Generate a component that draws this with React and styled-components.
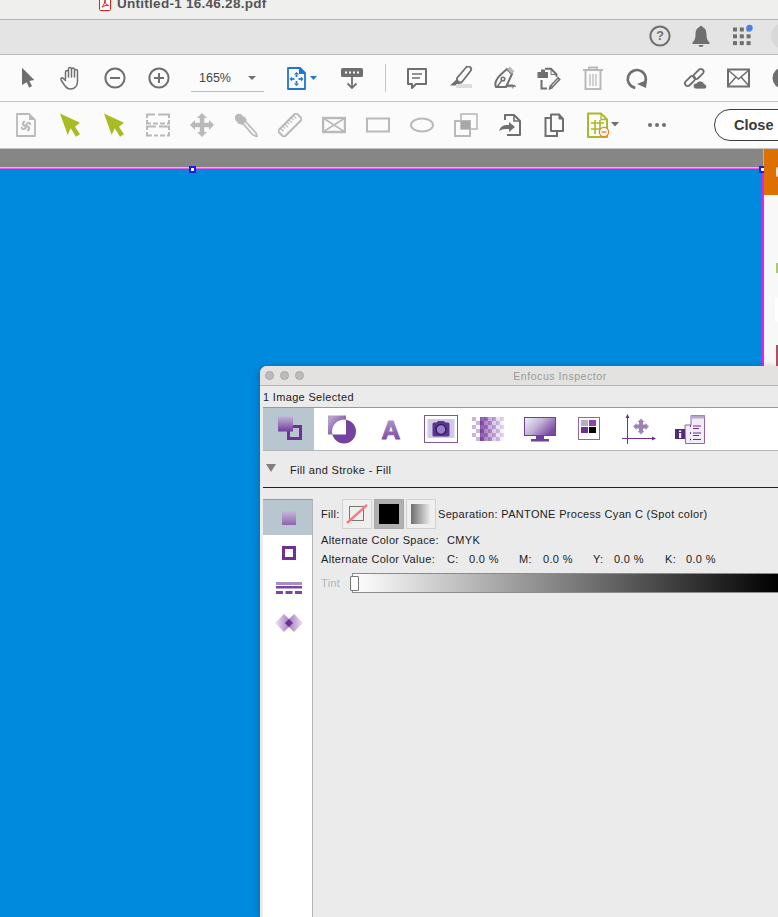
import styled, { createGlobalStyle } from "styled-components";

const GRAY = "#6f6f6f";
const OFF = "#b9b9b9";
const GREEN = "#a9bb22";
const BLUE = "#1f75d0";
const PURPLE = "#6f2f96";

const GlobalStyle = createGlobalStyle`
  html, body {
    margin: 0;
    padding: 0;
    background: #ffffff;
  }
  body {
    font-family: "Liberation Sans", Arial, sans-serif;
    overflow: hidden;
  }
`;

const Page = styled.div`
  width: 778px;
  height: 917px;
  display: flex;
  flex-direction: column;
  overflow: hidden;
`;

const TitleBar = styled.div`
  height: 20px;
  flex-shrink: 0;
  display: flex;
  align-items: flex-end;
  gap: 6px;
  padding: 0 0 8px 99px;
  box-sizing: border-box;
  overflow: hidden;
  background: #efefed;
  border-bottom: 1px solid #b4b4b4;
`;

const FileName = styled.span`
  font-size: 13.5px;
  line-height: 15px;
  font-weight: 700;
  letter-spacing: 0.27px;
  color: #555555;
  white-space: nowrap;
`;

const NavBar = styled.div`
  height: 35px;
  flex-shrink: 0;
  display: flex;
  align-items: center;
  justify-content: flex-end;
  box-sizing: border-box;
  padding-bottom: 2px;
  background: #e4e4e4;
  border-bottom: 1px solid #b9b9b9;
`;

const NavCell = styled.div`
  width: 41px;
  height: 32px;
  display: flex;
  align-items: center;
  justify-content: center;
`;

const Avatar = styled.div`
  width: 26px;
  height: 26px;
  flex-shrink: 0;
  margin-left: 9px;
  margin-right: -19px;
  border-radius: 50%;
  background: #d8d8d8;
`;

const Toolbar = styled.div`
  height: 47px;
  flex-shrink: 0;
  display: flex;
  align-items: center;
  box-sizing: border-box;
  padding-left: ${(p) => p.$inset}px;
  background: #fbfbfb;
  border-bottom: 1px solid #c4c4c4;
`;

const ToolCell = styled.div`
  width: 44px;
  height: 30px;
  flex-shrink: 0;
  display: flex;
  align-items: center;
  justify-content: center;
  margin-left: ${(p) => p.$gap || 0}px;
`;

const ZoomSelect = styled.div`
  width: 73px;
  height: 26px;
  flex-shrink: 0;
  margin: 1px 0 0 10px;
  display: flex;
  align-items: center;
  justify-content: space-between;
  box-sizing: border-box;
  padding: 0 8px 0 8px;
  font-size: 12.5px;
  color: #444444;
  border-bottom: 1px solid #bdbdbd;
`;

const ToolDivider = styled.div`
  width: 1px;
  height: 28px;
  flex-shrink: 0;
  margin-left: 11px;
  background: #c4c4c4;
`;

const CloseButton = styled.button`
  flex-shrink: 0;
  width: 90px;
  height: 32px;
  margin-left: 35px;
  padding: 0 0 0 19px;
  text-align: left;
  font-family: inherit;
  font-size: 14.5px;
  font-weight: 700;
  color: #3a3a3a;
  background: #ffffff;
  border: 1px solid #3c3c3c;
  border-radius: 16px;
`;

const Workspace = styled.div`
  position: relative;
  flex: 1;
  display: flex;
  min-height: 0;
`;

const Canvas = styled.div`
  flex: 1;
  display: flex;
  flex-direction: column;
  min-width: 0;
`;

const GrayBand = styled.div`
  height: 19px;
  flex-shrink: 0;
  box-sizing: border-box;
  background: #868686;
  border-right: 1px solid #b5b5b5;
  border-bottom: 1px solid #c9c9c9;
`;

const Sheet = styled.div`
  position: relative;
  flex: 1;
  background: #008ade;
  border-top: 1px solid #e85ce4;
  border-right: 2px solid #f01ce8;
`;

const Handle = styled.span`
  position: absolute;
  top: -3px;
  left: ${(p) => p.$x}px;
  width: 3px;
  height: 3px;
  background: #ffffff;
  border: 2px solid #1a1ae0;
`;

const SidePanel = styled.div`
  width: 14px;
  flex-shrink: 0;
  display: flex;
  flex-direction: column;
  align-items: flex-end;
  background: #f8f8f8;
`;

const OrangeHead = styled.div`
  align-self: stretch;
  height: 46px;
  margin-bottom: 68px;
  background: #dd7000;
  position: relative;
`;

const OrangeMark = styled.span`
  position: absolute;
  right: 0;
  top: 18px;
  width: 2px;
  height: 10px;
  background: #f4e7d8;
  border-radius: 6px 0 0 6px;
`;

const PanelMark = styled.span`
  width: ${(p) => p.$w}px;
  height: ${(p) => p.$h}px;
  margin-bottom: ${(p) => p.$after}px;
  background: ${(p) => p.$color};
`;

const Inspector = styled.section`
  position: absolute;
  top: 217px;
  left: 260px;
  right: 0;
  bottom: 0;
  display: flex;
  flex-direction: column;
  background: #ebebeb;
  border-top-left-radius: 7px;
  box-shadow: -2px 0 6px rgba(0, 0, 0, 0.18);
  overflow: hidden;
  color: #222222;
  font-size: 11px;
  letter-spacing: 0.33px;
`;

const WindowBar = styled.div`
  position: relative;
  height: 20px;
  flex-shrink: 0;
  display: flex;
  align-items: center;
  justify-content: center;
  box-sizing: border-box;
  padding-left: 82px;
  background: #e3e2e0;
  border-bottom: 1px solid #b5b5b5;
  color: #9a9a9a;
  font-size: 10.5px;
  letter-spacing: 0.55px;
`;

const Lights = styled.div`
  position: absolute;
  left: 5px;
  top: 5px;
  display: flex;
  gap: 6px;
`;

const Light = styled.span`
  width: 7px;
  height: 7px;
  border-radius: 50%;
  background: #bcbcba;
  border: 1px solid #a9a9a7;
`;

const SelectionBar = styled.div`
  height: 21px;
  flex-shrink: 0;
  display: flex;
  align-items: center;
  padding-left: 3px;
`;

const TabStrip = styled.div`
  height: 44px;
  flex-shrink: 0;
  display: flex;
  align-items: stretch;
  box-sizing: border-box;
  margin-left: 3px;
  background: #ffffff;
  border-top: 1px solid #999999;
  border-bottom: 1px solid #b5b5b5;
`;

const Tab = styled.div`
  width: 49.5px;
  flex-shrink: 0;
  display: flex;
  align-items: center;
  justify-content: center;
  &:first-child {
    width: 51px;
    margin-right: 3px;
    background: #b8c7cf;
  }
`;

const SectionHead = styled.div`
  height: 37px;
  flex-shrink: 0;
  display: flex;
  align-items: center;
  box-sizing: border-box;
  margin-left: 3px;
  padding: 2px 0 0 3px;
  gap: 14px;
  border-bottom: 1px solid #222222;
`;

const Triangle = styled.span`
  width: 0;
  height: 0;
  margin-top: -5px;
  border-left: 5px solid transparent;
  border-right: 5px solid transparent;
  border-top: 8px solid #808080;
`;

const Body = styled.div`
  flex: 1;
  display: flex;
  min-height: 0;
  margin-top: 11px;
  padding-left: 3px;
`;

const SideList = styled.div`
  width: 50px;
  flex-shrink: 0;
  box-sizing: border-box;
  background: #ffffff;
  border-top: 1px solid #999999;
  border-right: 1px solid #b5b5b5;
`;

const SideItem = styled.div`
  height: 35px;
  display: flex;
  align-items: center;
  justify-content: center;
  box-sizing: border-box;
  padding-left: 3px;
  background: ${(p) => (p.$active ? "#b8c7cf" : "transparent")};
`;

const Form = styled.div`
  flex: 1;
  min-width: 0;
  padding-left: 8px;
  display: flex;
  flex-direction: column;
`;

const FillRow = styled.div`
  height: 30px;
  flex-shrink: 0;
  margin-bottom: 1px;
  display: flex;
  align-items: center;
  gap: 2px;
  white-space: nowrap;
`;

const FillLabel = styled.span`
  width: 19px;
`;

const FillButton = styled.div`
  width: 30px;
  height: 30px;
  flex-shrink: 0;
  box-sizing: border-box;
  display: flex;
  align-items: center;
  justify-content: center;
  background: ${(p) => (p.$active ? "#b0b0b0" : "#efefef")};
  border: 1px solid ${(p) => (p.$active ? "#a9a9a9" : "#d2d2d2")};
`;

const BlackSwatch = styled.span`
  width: 20px;
  height: 20px;
  background: #000000;
`;

const GradientSwatch = styled.span`
  width: 20px;
  height: 20px;
  background: linear-gradient(to right, #6e6e6e, #f2f2f2);
`;

const MetaRow = styled.div`
  height: 19px;
  flex-shrink: 0;
  display: grid;
  grid-template-columns: 126px 22px 50px 24px 50px 21px 51px 21px 60px;
  align-items: center;
  white-space: nowrap;
`;

const TintRow = styled.div`
  height: 20px;
  flex-shrink: 0;
  margin-top: 5px;
  display: flex;
  align-items: center;
`;

const TintLabel = styled.span`
  width: 31px;
  color: #b5b5b5;
`;

const TintTrack = styled.div`
  position: relative;
  flex: 1;
  height: 20px;
  box-sizing: border-box;
  background: linear-gradient(to right, #ffffff, #000000);
  border: 1px solid #8c8c8c;
  border-right: 0;
`;

const TintThumb = styled.span`
  position: absolute;
  left: -3px;
  top: 2px;
  width: 9px;
  height: 15px;
  box-sizing: border-box;
  background: #ffffff;
  border: 1px solid #777777;
  border-radius: 1px;
`;

const Caret = styled.span`
  width: 0;
  height: 0;
  border-left: 4px solid transparent;
  border-right: 4px solid transparent;
  border-top: 4.5px solid ${(p) => p.$color};
`;

const Svg = ({ w = 24, h = 24, children }) => (
  <svg width={w} height={h} viewBox={`0 0 ${w} ${h}`} fill="none" style={{ display: "block" }}>
    {children}
  </svg>
);

const Arrows = ({ cx, cy, r, s, color }) => (
  <g fill={color}>
    <path d={`M${cx - s} ${cy - r + s} L${cx} ${cy - r} L${cx + s} ${cy - r + s} Z`} />
    <path d={`M${cx - s} ${cy + r - s} L${cx} ${cy + r} L${cx + s} ${cy + r - s} Z`} />
    <path d={`M${cx - r + s} ${cy - s} L${cx - r} ${cy} L${cx - r + s} ${cy + s} Z`} />
    <path d={`M${cx + r - s} ${cy - s} L${cx + r} ${cy} L${cx + r - s} ${cy + s} Z`} />
    <path d={`M${cx - 0.9} ${cy - r + s} h1.8 V${cy + r - s} h-1.8 Z`} />
    <path d={`M${cx - r + s} ${cy - 0.9} H${cx + r - s} v1.8 H${cx - r + s} Z`} />
  </g>
);

const PointerIcon = ({ color, green }) =>
  green ? (
    <Svg>
      <path d="M2 .5 L9.7 22 L12.7 15.3 L18 23.7 L22 21.3 L17 13.7 L22 9.7 Z" fill={color} strokeLinejoin="round" />
    </Svg>
  ) : (
    <Svg>
      <path d="M7 1.7 V19 L11.7 16.3 L14.3 21.7 L17 20 L14.3 15 L19.3 14 Z" fill={color} />
    </Svg>
  );

const HandIcon = () => (
  <Svg>
    <path
      d="M6.5 13 V6 a1.5 1.5 0 0 1 3 0 V11 M9.5 5 V3 a1.5 1.5 0 0 1 3 0 V11 M12.5 3.5 a1.5 1.5 0 0 1 3 0 V11 M15.5 5 a1.5 1.5 0 0 1 3 0 V15 c0 5 -3 8 -7 8 c-3.5 0 -5 -2 -6.5 -4.5 L2 14 c-.8 -1.5 1 -2.8 2.3 -1.6 L6.5 14.5"
      stroke={GRAY}
      strokeWidth="1.5"
      strokeLinecap="round"
      strokeLinejoin="round"
    />
  </Svg>
);

const ZoomIcon = ({ plus }) => (
  <Svg>
    <circle cx="12" cy="12" r="9.6" stroke={GRAY} strokeWidth="2" />
    <path d="M7 12 H17" stroke={GRAY} strokeWidth="2" />
    {plus && <path d="M12 7 V17" stroke={GRAY} strokeWidth="2" />}
  </Svg>
);

const FitIcon = () => (
  <Svg w={44} h={26}>
    <path d="M15 3 H27 L32 8 V24 H15 Z" stroke={BLUE} strokeWidth="1.8" strokeLinejoin="round" />
    <path d="M26 2 L33 9 H26 Z" fill={BLUE} />
    <Arrows cx={23.5} cy={14} r={7} s={2.6} color={BLUE} />
    <rect x="21.5" y="12" width="4" height="4" fill="#fbfbfb" />
    <path d="M37 11 H44 L40.5 15 Z" fill={BLUE} />
  </Svg>
);

const StampIcon = () => (
  <Svg>
    <rect x="1" y="2" width="22" height="9" rx="1.5" fill={GRAY} />
    <path d="M5 6.5 h14" stroke="#ffffff" strokeWidth="2" strokeDasharray="2 2" />
    <path d="M12 11 V22 M7.5 17.5 L12 22 L16.5 17.5" stroke={GRAY} strokeWidth="1.8" />
  </Svg>
);

const CommentIcon = () => (
  <Svg>
    <path d="M3 3 H21 V18 H11 L7 22 V18 H3 Z" stroke={GRAY} strokeWidth="2" strokeLinejoin="round" />
    <path d="M7 8 H17 M7 12 H15" stroke={GRAY} strokeWidth="1.4" />
  </Svg>
);

const HighlightIcon = () => (
  <Svg>
    <path d="M8 12 L17 1.5 a2.7 2.7 0 0 1 4.5 3.5 L12.5 16.5 L8 16.5 Z" stroke={GRAY} strokeWidth="1.8" strokeLinejoin="round" />
    <path d="M8 13 L12 17 L6 19.5 L1 19.5 Z" fill={GRAY} />
    <rect x="7" y="18" width="16" height="4" fill="#dddddd" />
  </Svg>
);

const SignIcon = () => (
  <Svg>
    <path d="M14 3 L19 8 L13 21 H3 C0 15 7 9 14 3 Z" stroke={GRAY} strokeWidth="2" strokeLinejoin="round" />
    <path d="M14 3 L17 .5 L21.5 5.5 L19 8 Z" fill="#bbbbbb" />
    <circle cx="10" cy="13" r="1.8" stroke={GRAY} strokeWidth="1.5" />
    <path d="M4 21 L9 14" stroke={GRAY} strokeWidth="1.4" />
    <path d="M14 21 q1 -4 2 0 q1 -4 2 0 q1 -4 2 0 q1 -3 2.5 0" stroke={GRAY} strokeWidth="1.3" />
  </Svg>
);

const DocEditIcon = () => (
  <Svg>
    <path d="M8 2.8 H14 L19.5 8.5 V11" stroke={GRAY} strokeWidth="1.9" />
    <path d="M14 2 V8.5 H20" stroke={GRAY} strokeWidth="1" />
    <path d="M4.5 14 V22.5 H10" stroke={GRAY} strokeWidth="2" />
    <path d="M.5 6 H4 V3.5 H8 V6 H11 V12 H.5 Z" fill={GRAY} />
    <path d="M14 21 L22.5 12" stroke={GRAY} strokeWidth="3.8" />
    <path d="M15 19.8 L21.3 13.2" stroke="#fbfbfb" strokeWidth="1" />
    <path d="M11.5 24 L12.6 19.4 L15.8 22.4 Z" fill={GRAY} />
  </Svg>
);

const TrashIcon = () => (
  <Svg>
    <path d="M2 4 H22 M8 4 V1.5 H16 V4" stroke={OFF} strokeWidth="2" />
    <path d="M4.5 5 V23 H19.5 V5" stroke={OFF} strokeWidth="2" />
    <path d="M9 8 V20 M12 8 V20 M15 8 V20" stroke={OFF} strokeWidth="1.3" />
  </Svg>
);

const RotateIcon = () => (
  <Svg>
    <path d="M19.5 17 A9 9 0 1 0 12 21" stroke={GRAY} strokeWidth="2.6" transform="rotate(10 12 12) translate(0 1)" />
    <path d="M13 21 L23 17 L22 25 Z" fill={GRAY} transform="translate(-1 -3)" />
  </Svg>
);

const LinkIcon = () => (
  <Svg w={26} h={24}>
    <rect x="-6" y="-2.7" width="12" height="5.4" rx="2.7" transform="translate(8 15) rotate(-45)" stroke={GRAY} strokeWidth="1.8" />
    <rect x="-6" y="-2.7" width="12" height="5.4" rx="2.7" transform="translate(16.5 8) rotate(-45)" stroke={GRAY} strokeWidth="1.8" />
    <path d="M14 23 a3 3 0 0 1 .5 -6 a4.5 4.5 0 0 1 8 1 a2.6 2.6 0 0 1 .5 5 Z" fill={GRAY} stroke="#fbfbfb" strokeWidth=".8" />
  </Svg>
);

const MailIcon = () => (
  <Svg>
    <rect x="1" y="3.5" width="21" height="17" stroke={GRAY} strokeWidth="2" />
    <path d="M1 4 L11.5 13 L22 4 M1 20 L9 11 M22 20 L14 11" stroke={GRAY} strokeWidth="1.5" />
  </Svg>
);

const DocFanIcon = () => (
  <Svg>
    <path d="M3 1 H15 L21 7 V23 H3 Z" stroke={OFF} strokeWidth="1.8" strokeLinejoin="round" />
    <path d="M15 1 V7 H21" fill={OFF} />
    <path d="M12 13 C8 13 8 8 11 9 M12 13 C16 13 16 18 13 17 M12 13 C12 9 17 9 16 12 M12 13 C12 17 7 17 8 14" stroke={OFF} strokeWidth="2" />
  </Svg>
);

const DashedTableIcon = () => (
  <Svg>
    <path d="M1 5 V1.5 H9 M12 1.5 H23 V5 M1 7 V10.5 H5 M7 10.5 H12 M14 10.5 H19 M21 10.5 H23 V7" stroke={OFF} strokeWidth="2" />
    <path d="M1 17 V13.5 H10 M13 13.5 H23 V17 M1 19 V22.5 H6 M8 22.5 H12 M14 22.5 H19 M21 22.5 H23 V19" stroke={OFF} strokeWidth="2" />
  </Svg>
);

const MoveIcon = () => (
  <Svg>
    <Arrows cx={12} cy={12} r={12} s={5} color={OFF} />
    <rect x="9.8" y="5" width="4.4" height="14" fill={OFF} />
    <rect x="5" y="9.8" width="14" height="4.4" fill={OFF} />
  </Svg>
);

const DropperIcon = () => (
  <Svg>
    <circle cx="5" cy="5" r="4.2" fill={OFF} />
    <path d="M3 10 L10 3 L13 7 L8 12 Z" fill={OFF} />
    <path d="M8.5 10 L11 8 L22 20 L23 23.5 L19 22 Z" stroke={OFF} strokeWidth="1.8" strokeLinejoin="round" />
  </Svg>
);

const RulerIcon = () => (
  <Svg>
    <g transform="rotate(-45 12 12)">
      <rect x="-1" y="7.5" width="26" height="9" rx="1.5" stroke={OFF} strokeWidth="2" />
      <path d="M3 8 v4 M6 8 v3 M9 8 v4 M12 8 v3 M15 8 v4 M18 8 v3 M21 8 v4" stroke={OFF} strokeWidth="1.2" />
    </g>
  </Svg>
);

const CrossBoxIcon = () => (
  <Svg>
    <rect x="1" y="5" width="22" height="14" stroke={OFF} strokeWidth="2.4" />
    <path d="M1 5 L23 19 M23 5 L1 19" stroke={OFF} strokeWidth="1.5" />
  </Svg>
);

const BoxIcon = () => (
  <Svg>
    <rect x="1" y="5.5" width="22" height="13" stroke={OFF} strokeWidth="2" />
  </Svg>
);

const OvalIcon = () => (
  <Svg>
    <ellipse cx="12" cy="12" rx="11" ry="6.5" stroke={OFF} strokeWidth="2" />
  </Svg>
);

const OverlapIcon = () => (
  <Svg>
    <rect x="7" y="1" width="16" height="15" stroke={OFF} strokeWidth="1.6" />
    <rect x="1" y="8" width="15" height="15" stroke={OFF} strokeWidth="2" />
    <rect x="7" y="8" width="9" height="8" fill="#a8a8a8" />
  </Svg>
);

const ImportIcon = () => (
  <Svg>
    <path d="M7 7 V2 H16 L22 8 V22 H9" stroke={GRAY} strokeWidth="2" strokeLinejoin="round" />
    <path d="M16 2 V8 H22" stroke={GRAY} strokeWidth="1.6" />
    <path d="M1 18 C3 12 7 12 11 12 V9 L17 14 L11 19 V16 C7 16 4 16 1 18 Z" fill={GRAY} />
  </Svg>
);

const CopyIcon = () => (
  <Svg>
    <path d="M9 1.5 H17 L21 6 V18 H9 Z" stroke={GRAY} strokeWidth="2" strokeLinejoin="round" />
    <path d="M17 1.5 V6 H21" fill={GRAY} stroke={GRAY} strokeWidth="1" />
    <path d="M9 5 H3.5 V23 H15 V18" stroke={GRAY} strokeWidth="2" />
  </Svg>
);

const SheetIcon = () => (
  <Svg w={44} h={26}>
    <path d="M12 1.5 H25 L31 7.5 V25 H12 Z" stroke={GREEN} strokeWidth="2" strokeLinejoin="round" />
    <path d="M25 1.5 V7.5 H31" stroke={GREEN} strokeWidth="1.3" />
    <path d="M15 11 H28 M15 17 H28 M19 8 V22 M24 8 V22" stroke={GREEN} strokeWidth="1.6" />
    <circle cx="28" cy="20" r="4.6" fill="#ffffff" stroke="#ee8420" strokeWidth="1.3" />
    <path d="M25.5 20 H30.5" stroke="#ee8420" strokeWidth="1.4" />
    <path d="M35 10 H43 L39 14.5 Z" fill={GRAY} />
  </Svg>
);

const HelpIcon = () => (
  <Svg>
    <circle cx="12" cy="12" r="9.6" stroke={GRAY} strokeWidth="2" />
    <text x="12" y="16.2" textAnchor="middle" fontFamily="Liberation Sans" fontWeight="700" fontSize="12.5" fill={GRAY}>?</text>
  </Svg>
);

const BellIcon = () => (
  <Svg>
    <path d="M12 3 C16.5 3 17.5 7 17.5 11 C17.5 15 19 17 20.5 18.5 V20 H3.5 V18.5 C5 17 6.5 15 6.5 11 C6.5 7 7.5 3 12 3 Z" fill={GRAY} />
    <circle cx="12" cy="3.4" r="1.7" fill={GRAY} />
    <path d="M9.5 21 H14.5 A2.5 2 0 0 1 9.5 21 Z" fill={GRAY} />
  </Svg>
);

const AppsIcon = () => (
  <Svg w={26} h={24}>
    {[0, 1, 2].flatMap((row) =>
      [0, 1, 2].map((col) => (
        <rect key={`${row}-${col}`} x={4 + col * 6.8} y={3.5 + row * 6.8} width="4" height="4" fill={GRAY} />
      ))
    )}
    <circle cx="20.5" cy="4" r="3.2" fill="#4a80ee" />
  </Svg>
);

const PersonIcon = () => (
  <Svg>
    <circle cx="12" cy="12" r="10.5" fill={GRAY} />
  </Svg>
);

const grad = (id, from, to, angle = 90) => (
  <linearGradient id={id} gradientTransform={`rotate(${angle} .5 .5)`}>
    <stop offset="0" stopColor={from} />
    <stop offset="1" stopColor={to} />
  </linearGradient>
);

const FillStrokeTab = () => (
  <Svg w={44} h={36}>
    <defs>{grad("tabA", "#c3b2d6", "#6f3f9c")}</defs>
    <rect x="21.5" y="15.5" width="12" height="12" stroke={PURPLE} strokeWidth="3" />
    <rect x="11" y="5.5" width="15" height="15" fill="url(#tabA)" />
  </Svg>
);

const ShapeTab = () => (
  <Svg w={44} h={36}>
    <defs>
      {grad("tabB", "#b6a1cd", "#6f3f9c", 45)}
      <clipPath id="tabBclip">
        <rect x="8" y="4.5" width="18" height="19" />
      </clipPath>
    </defs>
    <rect x="8" y="4.5" width="18" height="19" fill="url(#tabB)" />
    <circle cx="24" cy="20.5" r="12" fill="#77429f" />
    <circle cx="24" cy="20.5" r="12" fill="#ffffff" clipPath="url(#tabBclip)" />
  </Svg>
);

const LetterTab = () => (
  <Svg w={44} h={36}>
    <defs>{grad("tabC", "#b9a0d2", "#6f3a9c")}</defs>
    <text
      x="22"
      y="28"
      textAnchor="middle"
      fontFamily="Liberation Sans"
      fontWeight="700"
      fontSize="26"
      fill="url(#tabC)"
      stroke="url(#tabC)"
      strokeWidth="1"
    >
      A
    </text>
  </Svg>
);

const CameraTab = () => (
  <Svg w={44} h={36}>
    <rect x="5.5" y="4.5" width="33" height="27" fill="#ffffff" stroke="#7f55a8" />
    <rect x="8.5" y="8" width="27" height="19" fill="#d3cae3" />
    <path d="M13.5 13 Q13.5 11.5 15 11.5 H17.5 L19 10 H25 L26.5 11.5 H29 Q30.5 11.5 30.5 13 V24 Q30.5 25.5 29 25.5 H15 Q13.5 25.5 13.5 24 Z" fill="#5a3593" />
    <circle cx="22" cy="18.5" r="5" fill="#9a80c4" stroke="#35205f" strokeWidth="1.6" />
  </Svg>
);

const CheckerTab = () => (
  <Svg w={44} h={36}>
    <defs>{grad("tabD", "#6f2f96", "#e6dbf0", 0)}</defs>
    <rect x="10" y="6" width="26" height="24" fill="url(#tabD)" />
    {Array.from({ length: 6 }).flatMap((_, row) =>
      Array.from({ length: 9 }).map((_, col) =>
        (row + col) % 2 === 0 ? (
          <rect
            key={`${row}-${col}`}
            x={4 + col * 4}
            y={6 + row * 4}
            width="4"
            height="4"
            fill={col < 2 ? "#c9b4dc" : "#ffffff"}
            opacity={col < 2 ? 1 : 0.15 + (col - 2) * 0.12}
          />
        ) : col < 2 ? (
          <rect key={`${row}-${col}`} x={4 + col * 4} y={6 + row * 4} width="4" height="4" fill="#ffffff" />
        ) : null
      )
    )}
  </Svg>
);

const MonitorTab = () => (
  <Svg w={44} h={36}>
    <defs>
      <linearGradient id="tabE" x1="0" y1="0" x2="1" y2="0.6">
        <stop offset="0" stopColor="#eaf4fa" />
        <stop offset="0.5" stopColor="#c3b2d6" />
        <stop offset="1" stopColor="#7a4aa5" />
      </linearGradient>
    </defs>
    <rect x="6.5" y="6.5" width="31" height="18" fill="url(#tabE)" stroke="#6f3f9c" />
    <rect x="18" y="25" width="8" height="3" fill="#6f3f9c" />
    <rect x="13" y="28" width="18" height="2.5" fill="#6f3f9c" />
  </Svg>
);

const SwatchTab = () => (
  <Svg w={44} h={36}>
    <rect x="11.5" y="6.5" width="21" height="22" fill="#ffffff" stroke="#8d66ad" />
    <rect x="14" y="9" width="7" height="6" fill="#bba9cd" />
    <rect x="22" y="9" width="7" height="6" fill="#8e44ad" />
    <rect x="14" y="16" width="7" height="6" fill="#6f2f96" />
    <rect x="22" y="16" width="7" height="6" fill="#000000" />
  </Svg>
);

const AxesTab = () => (
  <Svg w={44} h={36}>
    <path d="M10.5 4 V33 M5 27.5 H38" stroke={PURPLE} strokeWidth="1" />
    <path d="M8.5 7 L10.5 3 L12.5 7 Z M35 25.5 L39 27.5 L35 29.5 Z" fill={PURPLE} />
    <Arrows cx={24} cy={15.5} r={8} s={3.5} color="#a78fc0" />
    <rect x="22" y="10" width="4" height="11" fill="#9c82b8" />
    <rect x="18.5" y="13.5" width="11" height="4" fill="#9c82b8" />
  </Svg>
);

const InfoDocTab = () => (
  <Svg w={44} h={36}>
    <path d="M19 14 H25 V4.5 H38.5 V32.5 H19.5 Z" fill="#f2ecf7" stroke="#8d66ad" />
    <rect x="25" y="4.5" width="13.5" height="3" fill="#b9a5cd" />
    <rect x="9" y="18" width="10" height="10" fill="#512a7e" />
    <rect x="13" y="22" width="2.2" height="5" fill="#ffffff" />
    <rect x="13" y="19.5" width="2.2" height="1.5" fill="#ffffff" />
    <path d="M27 15 H35 M27 17.5 H33 M27 22 H35 M27 24.5 H33 M27 28.5 H35" stroke={PURPLE} strokeWidth="1" />
    <path d="M24 15 h1 M24 22 h1 M24 28.5 h1" stroke="#3a2060" strokeWidth="1.4" />
  </Svg>
);

const SideFillIcon = () => (
  <Svg w={16} h={16}>
    <defs>{grad("sideA", "#c7b9d8", "#8c64b0")}</defs>
    <rect x="1" y="1" width="14" height="14" fill="url(#sideA)" />
  </Svg>
);

const SideStrokeIcon = () => (
  <Svg w={16} h={16}>
    <rect x="2.5" y="2.5" width="11" height="11" stroke={PURPLE} strokeWidth="3" />
  </Svg>
);

const SideDashIcon = () => (
  <Svg w={26} h={14}>
    <rect x="0" y="1" width="26" height="3" fill="#a98cc4" />
    <rect x="0" y="5" width="26" height="2.5" fill="#7a46a5" />
    <path d="M0 11.5 H26" stroke="#7a46a5" strokeWidth="3" strokeDasharray="7 2.5" />
  </Svg>
);

const SideJoinIcon = () => (
  <Svg w={30} h={20}>
    <defs>
      {grad("sideB", "#eee6f5", "#8f63b3", 0)}
      {grad("sideC", "#8f63b3", "#eee6f5", 0)}
    </defs>
    <path d="M1 10 L10 1 L19 10 L10 19 Z" fill="url(#sideB)" />
    <path d="M11 10 L20 1 L29 10 L20 19 Z" fill="url(#sideC)" />
    <path d="M11 10 L15 6 L19 10 L15 14 Z" fill={PURPLE} />
  </Svg>
);

const NoFillIcon = () => (
  <Svg w={24} h={24}>
    <rect x="4.5" y="4.5" width="14" height="14" stroke="#777777" />
    <path d="M2 21 L22 3" stroke="#f47c82" strokeWidth="2.4" />
  </Svg>
);

const PdfIcon = () => (
  <Svg w={12} h={17}>
    <rect x=".5" y=".5" width="11" height="16" rx="1" fill="#ffffff" stroke="#e01b1b" />
    <path d="M3 13 C5 11 6 8 6 6 C6 9 7 11 9.5 11.5 C7 11 5 12 3 13 Z" stroke="#e01b1b" strokeWidth="1" />
  </Svg>
);

const tabIcons = [
  FillStrokeTab,
  ShapeTab,
  LetterTab,
  CameraTab,
  CheckerTab,
  MonitorTab,
  SwatchTab,
  AxesTab,
  InfoDocTab,
];

function App() {
  return (
    <Page>
      <GlobalStyle />
      <TitleBar>
        <PdfIcon />
        <FileName>Untitled-1 16.46.28.pdf</FileName>
      </TitleBar>

      <NavBar>
        <NavCell><HelpIcon /></NavCell>
        <NavCell><BellIcon /></NavCell>
        <NavCell><AppsIcon /></NavCell>
        <Avatar />
      </NavBar>

      <Toolbar $inset={5}>
        <ToolCell><PointerIcon color={GRAY} /></ToolCell>
        <ToolCell><HandIcon /></ToolCell>
        <ToolCell><ZoomIcon /></ToolCell>
        <ToolCell><ZoomIcon plus /></ToolCell>
        <ZoomSelect>
          165%
          <Caret $color={GRAY} />
        </ZoomSelect>
        <ToolCell $gap={9}><FitIcon /></ToolCell>
        <ToolCell $gap={13}><StampIcon /></ToolCell>
        <ToolDivider />
        <ToolCell $gap={9}><CommentIcon /></ToolCell>
        <ToolCell><HighlightIcon /></ToolCell>
        <ToolCell><SignIcon /></ToolCell>
        <ToolCell><DocEditIcon /></ToolCell>
        <ToolCell><TrashIcon /></ToolCell>
        <ToolCell><RotateIcon /></ToolCell>
        <ToolCell $gap={14}><LinkIcon /></ToolCell>
        <ToolCell><MailIcon /></ToolCell>
        <ToolCell><PersonIcon /></ToolCell>
      </Toolbar>

      <Toolbar $inset={4}>
        <ToolCell><DocFanIcon /></ToolCell>
        <ToolCell><PointerIcon color={GREEN} green /></ToolCell>
        <ToolCell><PointerIcon color={GREEN} green /></ToolCell>
        <ToolCell><DashedTableIcon /></ToolCell>
        <ToolCell><MoveIcon /></ToolCell>
        <ToolCell><DropperIcon /></ToolCell>
        <ToolCell><RulerIcon /></ToolCell>
        <ToolCell><CrossBoxIcon /></ToolCell>
        <ToolCell><BoxIcon /></ToolCell>
        <ToolCell><OvalIcon /></ToolCell>
        <ToolCell><OverlapIcon /></ToolCell>
        <ToolCell><ImportIcon /></ToolCell>
        <ToolCell><CopyIcon /></ToolCell>
        <ToolCell><SheetIcon /></ToolCell>
        <ToolCell $gap={15}>
          <Svg w={24} h={6}>
            <circle cx="5" cy="3" r="2" fill={GRAY} />
            <circle cx="12" cy="3" r="2" fill={GRAY} />
            <circle cx="19" cy="3" r="2" fill={GRAY} />
          </Svg>
        </ToolCell>
        <CloseButton>Close</CloseButton>
      </Toolbar>

      <Workspace>
        <Canvas>
          <GrayBand />
          <Sheet>
            <Handle $x={189} />
            <Handle $x={759} />
          </Sheet>
        </Canvas>
        <SidePanel>
          <OrangeHead><OrangeMark /></OrangeHead>
          <PanelMark $w={2} $h={10} $after={25} $color="#a9cc6a" />
          <PanelMark $w={3} $h={24} $after={23} $color="#ffffff" />
          <PanelMark $w={2} $h={21} $after={0} $color="#b05060" />
        </SidePanel>

        <Inspector>
          <WindowBar>
            <Lights>
              <Light />
              <Light />
              <Light />
            </Lights>
            Enfocus Inspector
          </WindowBar>
          <SelectionBar>1 Image Selected</SelectionBar>
          <TabStrip>
            {tabIcons.map((Icon, i) => (
              <Tab key={i}><Icon /></Tab>
            ))}
          </TabStrip>
          <SectionHead>
            <Triangle />
            Fill and Stroke - Fill
          </SectionHead>
          <Body>
            <SideList>
              <SideItem $active><SideFillIcon /></SideItem>
              <SideItem><SideStrokeIcon /></SideItem>
              <SideItem><SideDashIcon /></SideItem>
              <SideItem><SideJoinIcon /></SideItem>
            </SideList>
            <Form>
              <FillRow>
                <FillLabel>Fill:</FillLabel>
                <FillButton><NoFillIcon /></FillButton>
                <FillButton $active><BlackSwatch /></FillButton>
                <FillButton><GradientSwatch /></FillButton>
                Separation: PANTONE Process Cyan C (Spot color)
              </FillRow>
              <MetaRow>
                <span>Alternate Color Space:</span>
                <span>CMYK</span>
              </MetaRow>
              <MetaRow>
                <span>Alternate Color Value:</span>
                <span>C:</span>
                <span>0.0 %</span>
                <span>M:</span>
                <span>0.0 %</span>
                <span>Y:</span>
                <span>0.0 %</span>
                <span>K:</span>
                <span>0.0 %</span>
              </MetaRow>
              <TintRow>
                <TintLabel>Tint</TintLabel>
                <TintTrack><TintThumb /></TintTrack>
              </TintRow>
            </Form>
          </Body>
        </Inspector>
      </Workspace>
    </Page>
  );
}

export default App;
